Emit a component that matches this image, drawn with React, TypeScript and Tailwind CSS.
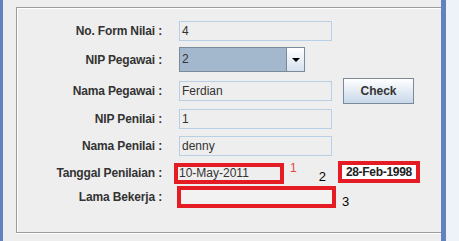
const font = "font-['Liberation_Sans',Arial,sans-serif]";

function Label({ children }: { children: string }) {
  return (
    <div className="w-[145px] shrink-0 text-right text-[12px] font-bold tracking-[-0.15px] text-[#333333]">
      {children}
    </div>
  );
}

function Field({ value }: { value: string }) {
  return (
    <div className="ml-[17px] h-[20px] w-[153px] border border-[#b8cfe5] bg-[#eeeeee] pl-[2px] text-[12px] leading-[18px] text-[#333333]">
      {value}
    </div>
  );
}

export default function App() {
  return (
    <div className={`flex h-[241px] w-[459px] bg-[#eeeeee] ${font}`}>
      <div className="w-[3px] shrink-0 bg-[#6381be]" />
      <div className="flex-1 pl-[13px] pt-[7px]">
        <div className="flex h-[226px] flex-col border border-r-0 border-[#9c9c9c] pt-[13px] shadow-[inset_1px_1px_0_#ffffff,0_1px_0_#ffffff]">
          {/* row 1 */}
          <div className="flex items-center">
            <Label>No. Form Nilai :</Label>
            <Field value="4" />
          </div>

          {/* row 2: combo */}
          <div className="mt-[6px] flex items-center">
            <Label>NIP Pegawai :</Label>
            <div className="ml-[17px] flex h-[25px] w-[126px] border border-[#7a8a99] bg-[#a3b8cc]">
              <div className="flex-1 pl-[2px] text-[12px] leading-[23px] text-[#333333]">2</div>
              <div className="flex w-[18px] items-center justify-center border-l border-[#7a8a99] bg-gradient-to-b from-[#ffffff] to-[#d5e1ee]">
                <div className="h-0 w-0 border-x-[4px] border-t-[4px] border-x-transparent border-t-black" />
              </div>
            </div>
          </div>

          {/* row 3 */}
          <div className="mt-[6px] flex h-[26px] items-center">
            <Label>Nama Pegawai :</Label>
            <Field value="Ferdian" />
            <button
              type="button"
              className="ml-[11px] h-[26px] w-[71px] border border-[#7a8a99] bg-gradient-to-b from-[#ffffff] to-[#c8d8e9] text-[12px] font-bold text-[#333333]"
            >
              Check
            </button>
          </div>

          {/* row 4 */}
          <div className="mt-[5px] flex items-center">
            <Label>NIP Penilai :</Label>
            <Field value="1" />
          </div>

          {/* row 5 */}
          <div className="mt-[7px] flex items-center">
            <Label>Nama Penilai :</Label>
            <Field value="denny" />
          </div>

          {/* row 6 */}
          <div className="mt-[5px] flex h-[23px] items-center">
            <Label>Tanggal Penilaian :</Label>
            <div className="ml-[12px] mt-[2px] h-[21px] w-[110px] border-[4px] border-[#e41c24] bg-[#eeeeee] pl-[1px] text-[12px] leading-[13px] text-[#333333]">
              10-May-2011
            </div>
            <div className="ml-[6px] mt-[1px] self-start text-[12px] leading-[12px] text-[#e8453c]">1</div>
            <div className="ml-[22px] mt-[10px] self-start text-[13px] leading-[12px] text-black">2</div>
            <div className="ml-[12px] h-[22px] w-[82px] self-start border-[4px] border-[#e41c24] bg-white text-center text-[12px] font-bold leading-[14px] tracking-[-0.3px] text-[#222222]">
              28-Feb-1998
            </div>
          </div>

          {/* row 7 */}
          <div className="mt-[2px] flex h-[22px] items-center">
            <Label>Lama Bekerja :</Label>
            <div className="ml-[15px] h-[22px] w-[159px] border-[4px] border-[#e41c24] bg-[#f2f2f2]" />
            <div className="ml-[6px] mt-[10px] text-[13px] leading-[12px] text-black">3</div>
          </div>
        </div>
      </div>
      <div className="w-[5px] shrink-0 bg-[#6381be]" />
      <div className="w-[13px] shrink-0 bg-[#eef3fa]" />
    </div>
  );
}
